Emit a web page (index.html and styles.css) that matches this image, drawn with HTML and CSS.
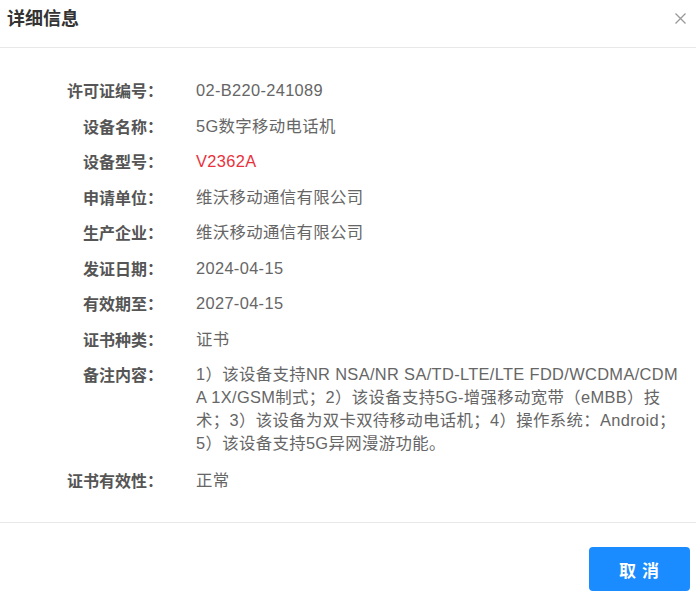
FILE: index.html
```html
<!DOCTYPE html>
<html lang="zh-CN">
<head>
<meta charset="utf-8">
<title>详细信息</title>
<link rel="stylesheet" href="styles.css">
</head>
<body>
<div class="dialog">
  <div class="header">
    <span class="title">详细信息</span>
    <span class="close" aria-label="关闭">
      <svg width="11" height="11" viewBox="0 0 11 11"><path d="M0.5 0.5 L10.5 10.5 M10.5 0.5 L0.5 10.5" stroke="#999" stroke-width="1.3" fill="none"/></svg>
    </span>
  </div>
  <div class="body">
    <div class="row"><div class="label">许可证编号：</div><div class="value">02-B220-241089</div></div>
    <div class="row"><div class="label">设备名称：</div><div class="value">5G数字移动电话机</div></div>
    <div class="row"><div class="label">设备型号：</div><div class="value red">V2362A</div></div>
    <div class="row"><div class="label">申请单位：</div><div class="value">维沃移动通信有限公司</div></div>
    <div class="row"><div class="label">生产企业：</div><div class="value">维沃移动通信有限公司</div></div>
    <div class="row"><div class="label">发证日期：</div><div class="value">2024-04-15</div></div>
    <div class="row"><div class="label">有效期至：</div><div class="value">2027-04-15</div></div>
    <div class="row"><div class="label">证书种类：</div><div class="value">证书</div></div>
    <div class="row multi"><div class="label">备注内容：</div><div class="value">1）该设备支持NR NSA/NR SA/TD-LTE/LTE FDD/WCDMA/CDM<br>A 1X/GSM制式；2）该设备支持5G-增强移动宽带（eMBB）技<br>术；3）该设备为双卡双待移动电话机；4）操作系统：Android；<br>5）该设备支持5G异网漫游功能。</div></div>
    <div class="row"><div class="label">证书有效性：</div><div class="value">正常</div></div>
  </div>
  <div class="footer">
    <button class="btn">取 消</button>
  </div>
</div>
</body>
</html>
```

FILE: styles.css
```css
html, body {
  margin: 0;
  padding: 0;
  background: #fff;
}
body {
  font-family: "Liberation Sans", "Noto Sans CJK SC", sans-serif;
  color: #666;
}
.dialog {
  width: 696px;
  height: 600px;
  display: flex;
  flex-direction: column;
}
.header {
  height: 48px;
  border-bottom: 1px solid #e8e8e8;
  display: flex;
  align-items: center;
  justify-content: space-between;
  padding: 0 10px 0 7px;
  box-sizing: border-box;
}
.title {
  font-family: "Noto Sans CJK SC", sans-serif;
  font-size: 18px;
  font-weight: bold;
  color: #333;
  margin-top: -13px;
}
.close {
  display: flex;
  margin-top: -11px;
}
.body {
  padding: 31px 2px 0 0;
  display: flex;
  flex-direction: column;
  gap: 12.5px;
  height: 475px;
  box-sizing: border-box;
  border-bottom: 1px solid #e8e8e8;
}
.row {
  display: flex;
  font-size: 16px;
  line-height: 23px;
}
.label {
  width: 163px;
  flex: none;
  text-align: right;
  font-family: "Noto Sans CJK SC", sans-serif;
  font-weight: bold;
  color: #555;
}
.value {
  margin-left: 33px;
  flex: 1;
  font-size: 16.4px;
  letter-spacing: 0.35px;
  word-break: break-all;
  color: #666;
}
.multi {
  margin-bottom: 1.5px;
}
.red {
  color: #e8323c;
}
.footer {
  flex: 1;
  display: flex;
  justify-content: flex-end;
  align-items: flex-start;
  padding: 24px 6px 0 0;
}
.btn {
  width: 101px;
  height: 44px;
  border: none;
  border-radius: 4px;
  background: #1a8cff;
  color: #fff;
  font-family: "Noto Sans CJK SC", sans-serif;
  font-size: 17px;
  font-weight: bold;
  letter-spacing: 1px;
  cursor: pointer;
}
```
